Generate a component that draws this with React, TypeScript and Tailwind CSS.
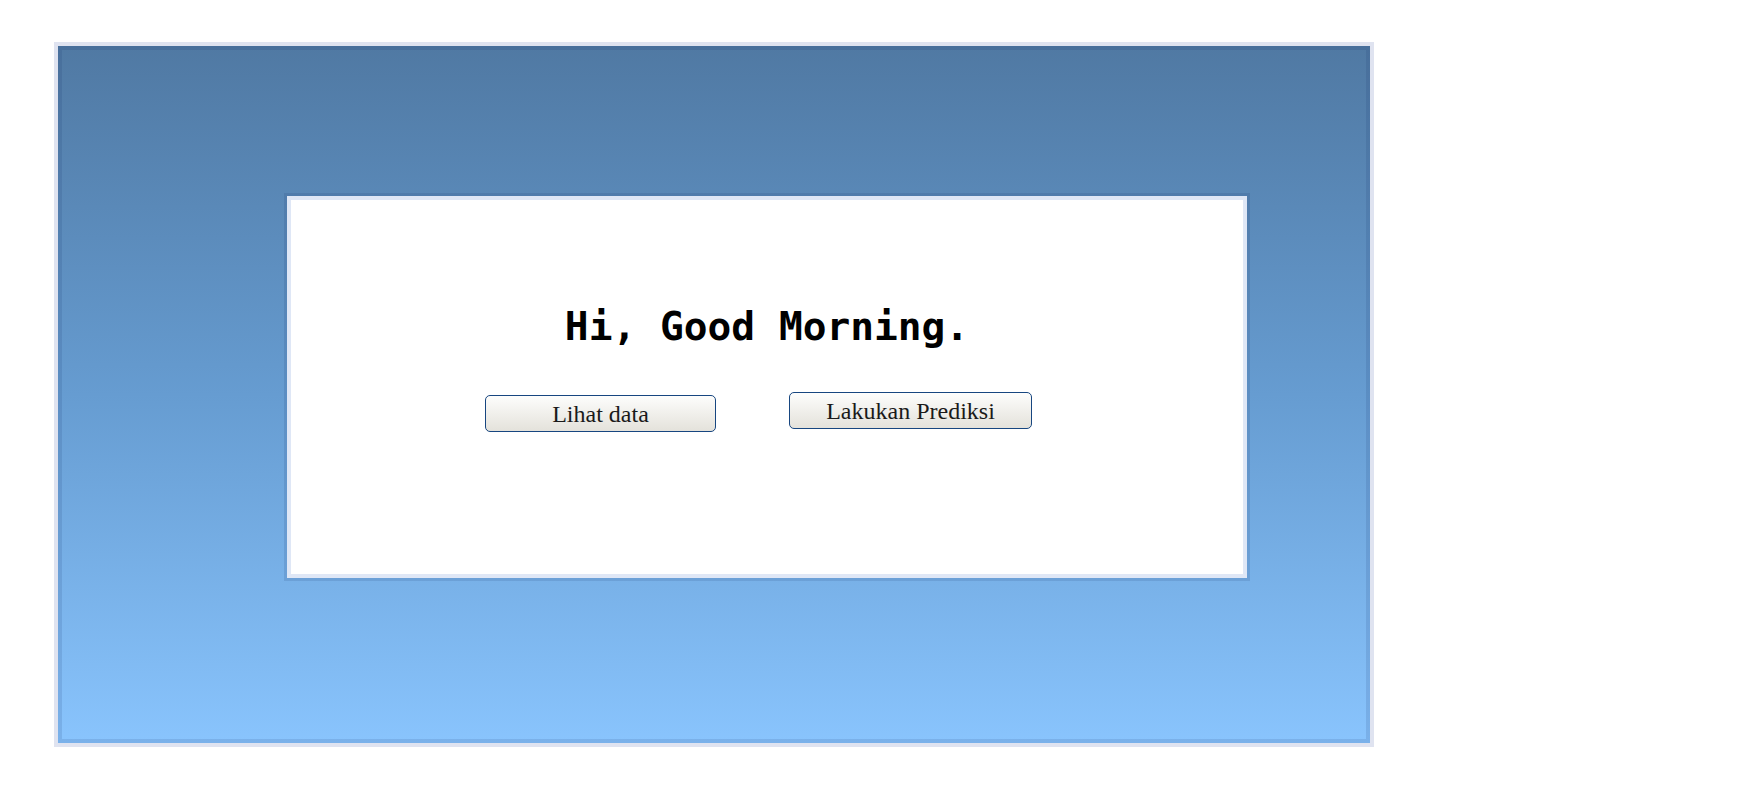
export default function App() {
  return (
    <div className="min-h-screen w-full bg-white">
      <div className="pt-[42px] pl-[54px]">
        <div className="w-[1320px] h-[705px] border-4 border-[#dfe3f0]">
          <div className="h-full w-full bg-gradient-to-b from-[#5079a3] via-[#669cd1] to-[#89c4fd] shadow-[inset_0_0_0_4px_rgba(20,45,100,0.12)] pt-[147px] pl-[226px]">
            <div className="w-[966px] h-[388px] border-[3px] border-[rgba(20,45,100,0.13)]">
              <div className="h-full w-full border-4 border-[#dfe7f6] bg-white">
                <h1 className="mt-[106px] text-center text-[39.5px] leading-[40px] font-bold text-black font-['DejaVu_Sans_Mono',monospace]">
                  Hi, Good Morning.
                </h1>
                <div className="mt-[46px] flex items-start pl-[194px] gap-[73px]">
                  <button className="mt-[3px] w-[231px] h-[37px] rounded-[5px] border border-[#174680] bg-gradient-to-b from-[#fdfdfc] to-[#e4e2db] text-[24px] leading-none text-[#1a1a1a] font-['Liberation_Serif',serif]">
                    Lihat data
                  </button>
                  <button className="w-[243px] h-[37px] rounded-[5px] border border-[#174680] bg-gradient-to-b from-[#fdfdfc] to-[#e4e2db] text-[24px] leading-none text-[#1a1a1a] font-['Liberation_Serif',serif]">
                    Lakukan Prediksi
                  </button>
                </div>
              </div>
            </div>
          </div>
        </div>
      </div>
    </div>
  );
}
